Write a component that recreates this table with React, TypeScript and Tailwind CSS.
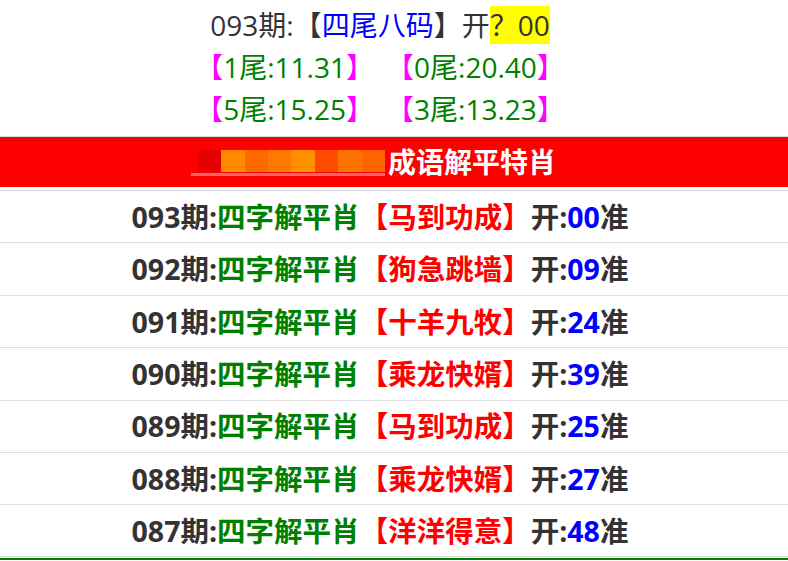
import React from "react";

const rows = [
  { q: "093", w: "马到功成", n: "00" },
  { q: "092", w: "狗急跳墙", n: "09" },
  { q: "091", w: "十羊九牧", n: "24" },
  { q: "090", w: "乘龙快婿", n: "39" },
  { q: "089", w: "马到功成", n: "25" },
  { q: "088", w: "乘龙快婿", n: "27" },
  { q: "087", w: "洋洋得意", n: "48" },
];

const mosaic = ["#e40000", "#ff8a00", "#ff6a00", "#ff7800", "#ff9000", "#ff4a00", "#ff7400", "#ff6400"];

function Tail({ a, b }: { a: string; b: string }) {
  return (
    <span>
      <span className="text-[#ff00ff]">【</span>
      <span className="text-[#008000]">{a}尾:{b}</span>
      <span className="text-[#ff00ff]">】</span>
    </span>
  );
}

export default function App() {
  return (
    <div
      className="w-[788px] bg-white"
      style={{ fontFamily: '"Open Sans", "Noto Sans CJK SC", sans-serif' }}
    >
      <div className="pt-[4px] pb-[6px] pr-[28px] text-center text-[28px] leading-[42px] text-[#333]">
        <div>
          093期:【<span className="text-[#0000ff]">四尾八码</span>】开
          <span className="bg-[#ffff00]">？00</span>
        </div>
        <div className="flex justify-center gap-[12px]">
          <Tail a="1" b="11.31" />
          <Tail a="0" b="20.40" />
        </div>
        <div className="flex justify-center gap-[12px]">
          <Tail a="5" b="15.25" />
          <Tail a="3" b="13.23" />
        </div>
      </div>
      <div className="border-t border-[#dddddd] h-[51px] pr-[34px] bg-[#ff0000] flex items-center justify-center">
        <div className="relative flex h-[22px] mr-[3px] mt-[-2px]">
          {mosaic.map((c, i) => (
            <div key={i} className="w-[23.4px] h-[22px]" style={{ background: c }} />
          ))}
          <div className="absolute left-[-7px] right-0 bottom-[-4px] h-[3px] bg-[#ff6565]" />
        </div>
        <span className="text-white font-bold text-[28px] leading-none">成语解平特肖</span>
      </div>
      <div className="pt-[3px]">
        <div className="pb-[1px] border-b-[2px] border-[#008000]">
          {rows.map((r) => (
            <div
              key={r.q}
              className="h-[52.4px] pr-[28px] pt-[1px] border-t border-[#dddddd] last:border-b flex items-center justify-center font-bold text-[28.5px] text-[#333]"
            >
              {r.q}期:<span className="text-[#008000]">四字解平肖</span>
              <span className="text-[#ff0000]">【{r.w}】</span>开:
              <span className="text-[#0000ff]">{r.n}</span>准
            </div>
          ))}
        </div>
      </div>
    </div>
  );
}
